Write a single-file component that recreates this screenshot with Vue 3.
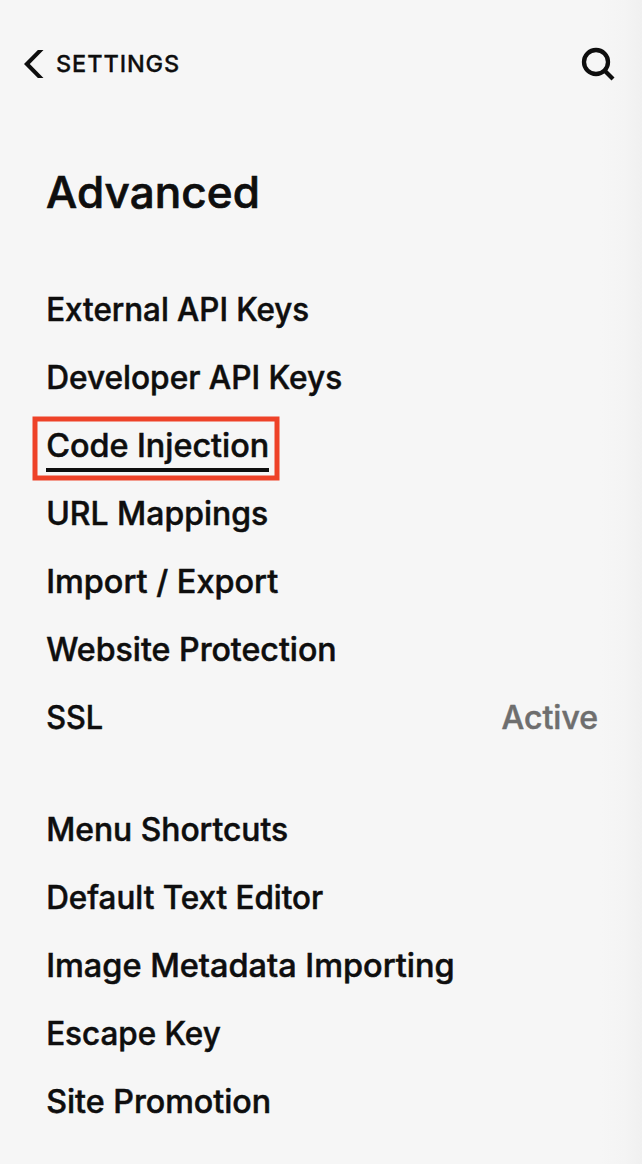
<script setup>
const groups = [
  [
    { t: 'External API Keys', w: 263 },
    { t: 'Developer API Keys', w: 296 },
    { t: 'Code Injection', w: 223, active: true },
    { t: 'URL Mappings', w: 222 },
    { t: 'Import / Export', w: 232 },
    { t: 'Website Protection', w: 290.5 },
    { t: 'SSL', w: 57, status: 'Active' },
  ],
  [
    { t: 'Menu Shortcuts', w: 242 },
    { t: 'Default Text Editor', w: 277 },
    { t: 'Image Metadata Importing', w: 408.5 },
    { t: 'Escape Key', w: 174.5 },
    { t: 'Site Promotion', w: 225 },
  ],
]
</script>

<template>
  <main class="panel">
    <header class="top">
      <a class="back">
        <svg class="chevron" width="20" height="28" viewBox="0 0 20 28"><path d="M13.900 0H19.500L5.800 14l13.700 14h-5.600L0 14z" /></svg>
        <span>SETTINGS</span>
      </a>
      <svg class="search" width="34" height="34" viewBox="0 0 34 34"><circle cx="15" cy="15" r="12" /><path d="m23.500 23.500 8.500 8.500" /></svg>
    </header>
    <h1>Advanced</h1>
    <ul v-for="(g, i) in groups" :key="i">
      <li v-for="it in g" :key="it.t">
        <span class="label" :class="{ active: it.active }">
          <svg :width="it.w + 4" height="44"><text x="0.200" y="33" :textLength="it.w" lengthAdjust="spacingAndGlyphs">{{ it.t }}</text></svg>
          <svg v-if="it.active" class="frame" width="248" height="66"><rect x="3" y="3" width="242" height="59" /></svg>
        </span>
        <span v-if="it.status" class="status">{{ it.status }}</span>
      </li>
    </ul>
  </main>
</template>

<style>
body { background: #f6f6f6; }
</style>
<style scoped>
.panel { box-sizing: border-box; height: 1164px; overflow: hidden; padding: 46px 0 0; background: linear-gradient(to right, #f6f6f6 600px, #f4f4f4 625px, #f0f0f0 642px); color: #0e0e0e; font-family: Inter, "Liberation Sans", sans-serif; font-weight: 500; }
.top { display: flex; justify-content: space-between; height: 36px; align-items: center; padding: 0 27px 0 24px; }
.back { display: flex; align-items: center; gap: 12px; font-size: 23.5px; letter-spacing: 0.9px; -webkit-text-stroke: 0.3px #0e0e0e; }
.back span { margin-top: -2px; }
svg { display: block; fill: none; stroke: #0e0e0e; stroke-width: 4; overflow: visible; }
.search { stroke-width: 4.3; }
.chevron { fill: #0e0e0e; stroke: none; }
text { fill: #0e0e0e; stroke: #0e0e0e; stroke-width: 0.5; font-size: 32px; }
h1 { margin: 82px 0 0 46px; font-size: 44px; line-height: 56px; font-weight: 500; letter-spacing: 0.1px; -webkit-text-stroke: 0.7px #0e0e0e; }
ul { list-style: none; margin: 56px 44px 0 46px; padding: 0; }
ul + ul { margin-top: 44px; }
li { display: flex; justify-content: space-between; align-items: center; height: 68px; }
.label { position: relative; }
.frame { position: absolute; left: -14px; top: -8px; stroke: #ee4228; stroke-width: 5; }
.active::after { content: ""; position: absolute; left: 0; top: 44px; width: 223px; height: 4px; background: #0e0e0e; }
.status { color: #6e6e6e; font-size: 32px; line-height: 44px; margin-top: -1px; -webkit-text-stroke: 0.5px #6e6e6e; }
</style>
